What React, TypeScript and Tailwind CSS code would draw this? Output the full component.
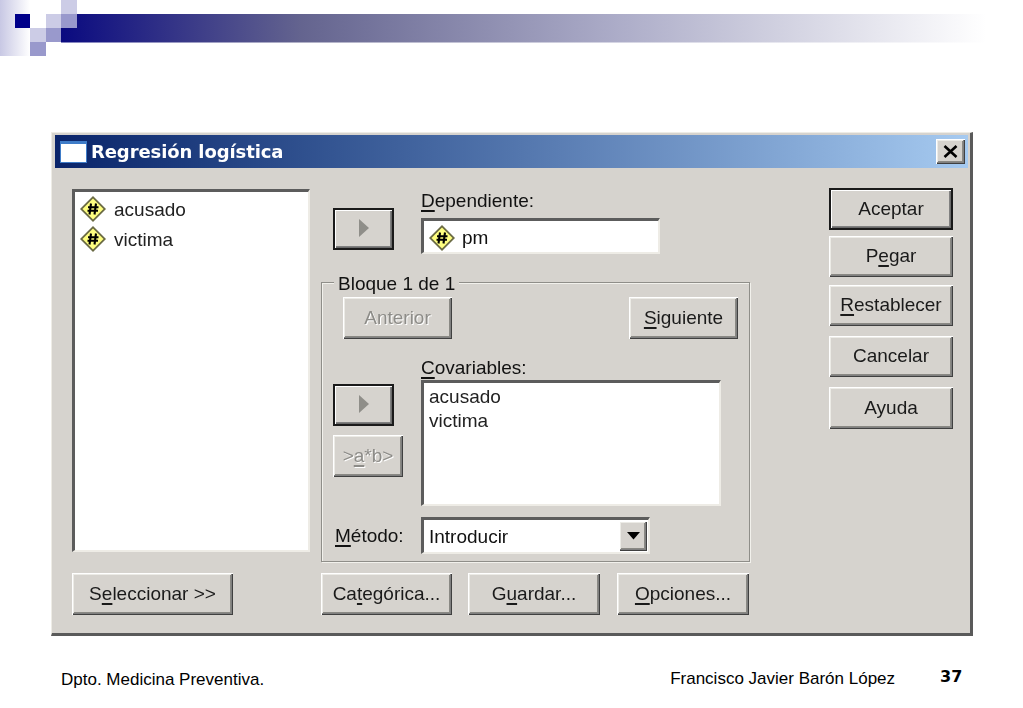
import React from "react";

const raisedBase =
  "flex items-center justify-center pb-[2px] bg-[#d6d3ce] text-[19px] leading-none shadow-[inset_1px_1px_0_#fff,inset_-1px_-1px_0_#404040,inset_-2px_-2px_0_#808080,inset_2px_2px_0_#ecebe6,inset_-3px_-3px_0_#8a8984]";
const raised = `${raisedBase} text-[#1a1a1a]`;
const disabled = `${raisedBase} text-[#8d8c88]`;
const focused =
  "flex items-center justify-center pb-[2px] bg-[#d6d3ce] text-[#1a1a1a] text-[19px] leading-none border-2 border-[#1a1a1a] shadow-[inset_1px_1px_0_#fff,inset_-1px_-1px_0_#6b6b6b,inset_-2px_-2px_0_#808080]";
const sunken =
  "bg-white border-t-[3px] border-l-[3px] border-r-[2px] border-b-[2px] border-t-[#5c5c5c] border-l-[#5c5c5c] border-r-[#eeece6] border-b-[#eeece6]";

function U({ children }: { children: React.ReactNode }) {
  return <span className="underline underline-offset-[3px] decoration-[1.5px]">{children}</span>;
}

function NumIcon() {
  return (
    <svg width="28" height="28" viewBox="0 0 28 28" className="shrink-0">
      <polygon points="14,1 27,14 14,27 1,14" fill="#6a6a44" />
      <polygon points="14,3.5 24.5,14 14,24.5 3.5,14" fill="#ffff80" />
      <path d="M12 8.5 10.5 19.5M17 8.5 15.5 19.5M9 12.2h10.5M8.5 15.8h10.5" stroke="#000" strokeWidth="2.1" fill="none" />
    </svg>
  );
}

function ArrowBtn() {
  return (
    <div className={`${focused} w-[61px] h-[42px]`}>
      <svg width="12" height="20" viewBox="0 0 12 20">
        <polygon points="1,1 11,10 1,19" fill="#8f8e89" />
      </svg>
    </div>
  );
}

export default function App() {
  return (
    <div className="w-[1023px] h-[708px] bg-white overflow-hidden font-['Liberation_Sans',Arial,sans-serif] text-[#111]">
      <svg width="1023" height="56" viewBox="0 0 1023 56" className="block">
        <defs>
          <linearGradient id="bar" x1="0" x2="1" y1="0" y2="0">
            <stop offset="0" stopColor="#0a0a80" />
            <stop offset="0.26" stopColor="#64648f" />
            <stop offset="0.6" stopColor="#acacc8" />
            <stop offset="1" stopColor="#ffffff" />
          </linearGradient>
          <linearGradient id="fade" x1="0" x2="1" y1="0" y2="0">
            <stop offset="0" stopColor="#c8c8e4" />
            <stop offset="1" stopColor="#ffffff" />
          </linearGradient>
        </defs>
        <rect x="0" y="0" width="30" height="56" fill="url(#fade)" />
        <rect x="61" y="14" width="925" height="28.5" fill="url(#bar)" />
        <rect x="15" y="14" width="15" height="14" fill="#00008a" />
        <rect x="46" y="14" width="15" height="14" fill="#ccccE6" />
        <rect x="61" y="0" width="16" height="14" fill="#ccccE6" />
        <rect x="61" y="14" width="16" height="14" fill="#9999cc" />
        <rect x="30" y="28" width="16" height="14" fill="#ccccE6" />
        <rect x="46" y="28" width="15" height="14" fill="#9999cc" />
        <rect x="30" y="42" width="16" height="14" fill="#9999cc" />
      </svg>

      <div className="mt-[76px] ml-[51px] w-[922px] h-[504px] bg-[#d6d3ce] pt-[2px] pl-[3px] pr-[2px] blur-[0.35px] border-r-[3px] border-b-[3px] border-r-[#5a5a5a] border-b-[#5a5a5a] border-t-[1px] border-l-[1px] border-t-[#eeece6] border-l-[#eeece6]">
        <div className="h-[33px] flex items-center pl-[5px] pr-[3px] bg-gradient-to-r from-[#0a246a] to-[#a6caf0]">
          <div className="w-[27px] h-[22px] bg-white border-t-[3px] border-[#3f7cc8] border-x-[1px] border-b-[1px]" />
          <span className="ml-[4px] text-[18px] font-bold text-white font-['DejaVu_Sans',sans-serif] leading-none tracking-[-0.1px]">
            Regresión logística
          </span>
          <div className={`${raised} ml-auto w-[29px] h-[25px] !pb-0`}>
            <svg width="15" height="13" viewBox="0 0 15 13">
              <path d="M1.5 1 13.5 12M13.5 1 1.5 12" stroke="#000" strokeWidth="2.6" fill="none" />
            </svg>
          </div>
        </div>

        <div className="flex pl-[17px] pt-[21px]">
          <div className="w-[238px] shrink-0">
            <div className={`${sunken} h-[363px] pl-[4px] pt-[2px] text-[19px] leading-none`}>
              <div className="flex items-center gap-[7px] h-[30px]">
                <NumIcon />
                <span className="text-[#222]">acusado</span>
              </div>
              <div className="flex items-center gap-[7px] h-[30px]">
                <NumIcon />
                <span className="text-[#222]">victima</span>
              </div>
            </div>
            <div className={`${raised} w-[161px] h-[42px] mt-[21px]`}>
              <span>S<U>e</U>leccionar &gt;&gt;</span>
            </div>
          </div>

          <div className="w-[429px] ml-[11px] shrink-0">
            <div className="flex">
              <div className="ml-[12px] mt-[19px]">
                <ArrowBtn />
              </div>
              <div className="ml-[27px]">
                <div className="h-[24px] text-[19px] leading-[24px]">
                  <U>D</U>ependiente:
                </div>
                <div className={`${sunken} mt-[5px] w-[239px] h-[36px] flex items-center pl-[4px] pt-[3px] gap-[6px] text-[19px]`}>
                  <NumIcon />
                  <span>pm</span>
                </div>
              </div>
            </div>

            <div className="relative mt-[28px] h-[280px] border border-[#8f8e89] shadow-[inset_1px_1px_0_#f2f1ec,1px_1px_0_#f2f1ec] pt-[14px] pl-[21px] pr-[11px]">
              <div className="absolute left-[12px] top-[-11px] bg-[#d6d3ce] px-[4px] text-[19px] leading-[24px]">
                Bloque 1 de 1
              </div>
              <div className="flex justify-between">
                <div className={`${disabled} w-[109px] h-[42px]`}>
                  <span className="[text-shadow:1px_1px_0_#fff]">Anterior</span>
                </div>
                <div className={`${raised} w-[109px] h-[42px]`}>
                  <span><U>S</U>iguiente</span>
                </div>
              </div>

              <div className="flex mt-[16px] -ml-[10px]">
                <div className="w-[70px] pt-[29px] flex flex-col gap-[9px] items-start shrink-0">
                  <ArrowBtn />
                  <div className={`${disabled} w-[70px] h-[42px]`}>
                    <span className="[text-shadow:1px_1px_0_#fff]">&gt;<U>a</U>*b&gt;</span>
                  </div>
                </div>
                <div className="ml-[18px]">
                  <div className="h-[25px] text-[19px] leading-[25px]">
                    <U>C</U>ovariables:
                  </div>
                  <div className={`${sunken} w-[300px] h-[126px] pl-[5px] pt-[2px] text-[19px] leading-[24px] text-[#222]`}>
                    <div>acusado</div>
                    <div>victima</div>
                  </div>
                </div>
              </div>

              <div className="flex items-center mt-[11px] -ml-[8px]">
                <span className="w-[86px] text-[19px] leading-none"><U>M</U>étodo:</span>
                <div className={`${sunken} w-[229px] h-[37px] flex items-center pl-[5px] pr-[1px]`}>
                  <span className="text-[19px] relative top-[1px]">Introducir</span>
                  <div className={`${raised} ml-auto w-[28px] h-[30px] !pb-0`}>
                    <svg width="13" height="8" viewBox="0 0 13 8">
                      <polygon points="0,0 13,0 6.5,7.5" fill="#000" />
                    </svg>
                  </div>
                </div>
              </div>
            </div>

            <div className="flex mt-[11px]">
              <div className={`${raised} w-[131px] h-[42px]`}>
                <span>Ca<U>t</U>egórica...</span>
              </div>
              <div className={`${raised} w-[132px] h-[42px] ml-[16px]`}>
                <span>G<U>u</U>ardar...</span>
              </div>
              <div className={`${raised} w-[132px] h-[42px] ml-[17px]`}>
                <span><U>O</U>pciones...</span>
              </div>
            </div>
          </div>

          <div className="w-[124px] ml-[79px] -mt-[1px] shrink-0 flex flex-col">
            <div className={`${focused} h-[42px]`}>Aceptar</div>
            <div className={`${raised} h-[41px] mt-[6px]`}>
              <span>P<U>e</U>gar</span>
            </div>
            <div className={`${raised} h-[41px] mt-[8px]`}>
              <span><U>R</U>establecer</span>
            </div>
            <div className={`${raised} h-[41px] mt-[10px]`}>Cancelar</div>
            <div className={`${raised} h-[42px] mt-[10px]`}>Ayuda</div>
          </div>
        </div>
      </div>

      <div className="flex items-center mt-[29px] ml-[61px] h-[24px] text-[17px] text-black">
        <span className="relative top-[3px]">Dpto. Medicina Preventiva.</span>
        <span className="ml-[406px] relative top-[2px]">Francisco Javier Barón López</span>
        <span className="ml-[45px] text-[16px] font-bold font-['DejaVu_Sans',sans-serif]">37</span>
      </div>
    </div>
  );
}
